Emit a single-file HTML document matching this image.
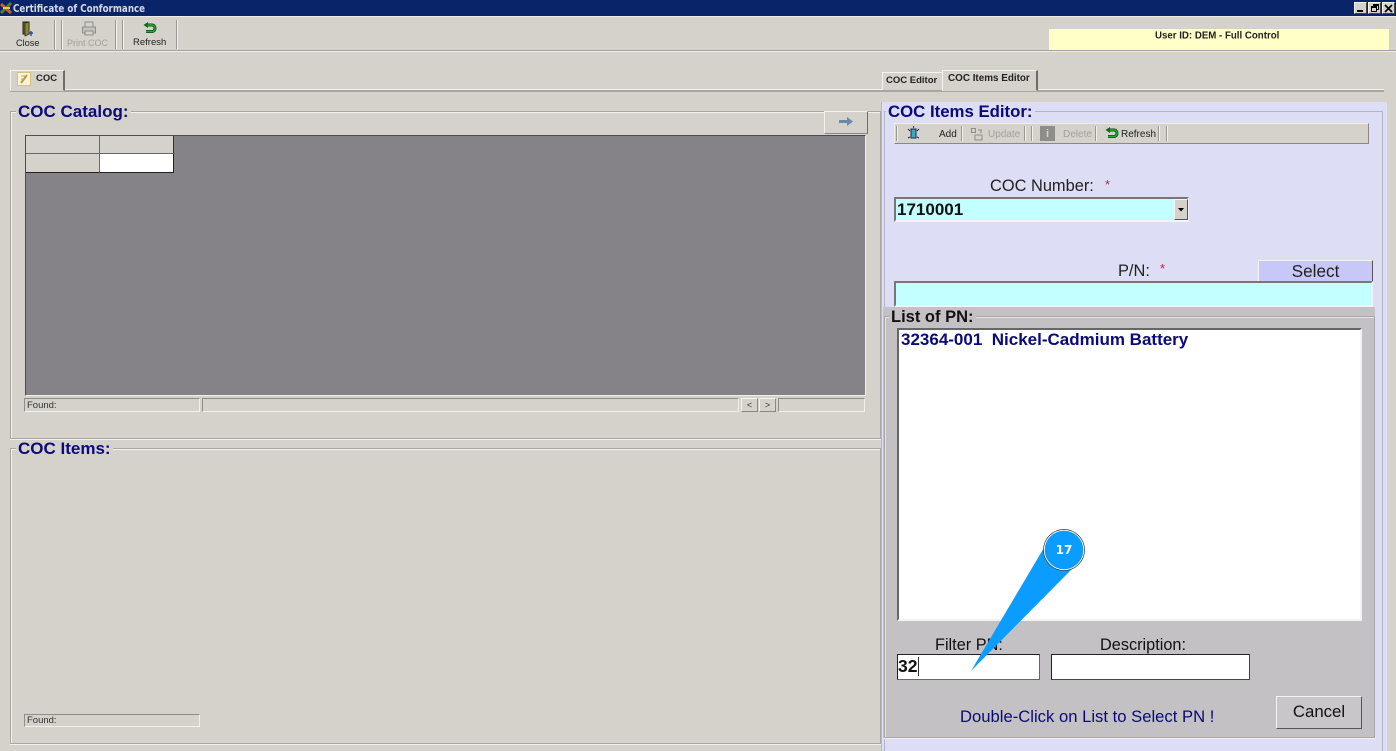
<!DOCTYPE html>
<html>
<head>
<meta charset="utf-8">
<style>
html,body{margin:0;padding:0;width:1396px;height:751px;overflow:hidden;background:#d5d2cc;font-family:"Liberation Sans",sans-serif;}
.a{position:absolute;box-sizing:border-box;white-space:nowrap;}
.sep{position:absolute;width:2px;background:#f2f0ec;border-left:1px solid #9a9894;box-sizing:border-box;}
.ttl{font-weight:bold;font-size:17px;color:#0a0a7a;line-height:18px;}
.sunken{border:1px solid;border-color:#8f8d89 #f3f1ed #f3f1ed #8f8d89;}
</style>
</head>
<body>
<!-- title bar -->
<div class="a" style="left:0;top:0;width:1396px;height:16px;background:#0a246a;"></div>
<div class="a" style="left:0;top:16px;width:1396px;height:1px;background:#f0eee9;"></div>
<svg class="a" style="left:0;top:1px;" width="13" height="14" viewBox="0 0 13 14"><path d="M1 12L11 2" stroke="#5a7a2a" stroke-width="3"/><path d="M1 3L11 12" stroke="#c0622a" stroke-width="3"/><path d="M3 7h7" stroke="#e8c850" stroke-width="2"/></svg>
<div class="a" style="left:13px;top:3px;font-size:10.500px;font-weight:bold;color:#d8d8e4;line-height:13px;font-family:'DejaVu Sans',sans-serif;transform:scaleX(.83);transform-origin:left;">Certificate of Conformance</div>
<!-- window buttons -->
<div class="a" style="left:1354px;top:2px;width:13px;height:12px;background:#d5d2cc;border:1px solid;border-color:#f5f5f5 #444 #444 #f5f5f5;"><div class="a" style="left:2px;top:7px;width:6px;height:2px;background:#000;"></div></div>
<div class="a" style="left:1368px;top:2px;width:13px;height:12px;background:#d5d2cc;border:1px solid;border-color:#f5f5f5 #444 #444 #f5f5f5;"><div class="a" style="left:4px;top:1px;width:6px;height:6px;border:1px solid #000;border-top-width:2px;"></div><div class="a" style="left:2px;top:3px;width:6px;height:6px;border:1px solid #000;border-top-width:2px;background:#d5d2cc;"></div></div>
<div class="a" style="left:1382px;top:2px;width:13px;height:12px;background:#d5d2cc;border:1px solid;border-color:#f5f5f5 #444 #444 #f5f5f5;"><svg class="a" style="left:1px;top:1px;" width="10" height="9"><path d="M1 1L8 8M8 1L1 8" stroke="#000" stroke-width="1.600"/></svg></div>

<!-- toolbar -->
<svg class="a" style="left:20px;top:21px;" width="15" height="16" viewBox="0 0 15 16"><path d="M3 1h6v12H3z" fill="#6a6a20" stroke="#222"/><path d="M5 2l4-1v12l-4 2z" fill="#8a8a30" stroke="#222" stroke-width=".7"/><path d="M9 12h4m-2-2v5" stroke="#2a4a9a" stroke-width="1.400" fill="none"/></svg>
<div class="a" style="left:16px;top:37px;font-size:9.200px;line-height:12px;color:#222;">Close</div>
<div class="sep" style="left:54px;top:20px;height:29px;"></div>
<div class="sep" style="left:61px;top:20px;height:29px;"></div>
<svg class="a" style="left:81px;top:21px;" width="16" height="15" viewBox="0 0 16 15" fill="none" stroke="#8f8d89"><path d="M4 6V1h8v5"/><path d="M1.500 6h13v6h-13z" fill="#c5c3bd"/><path d="M4 10h8v4H4z" fill="#d5d2cc"/></svg>
<div class="a" style="left:67px;top:37px;font-size:9px;line-height:12px;color:#a3a19d;">Print COC</div>
<div class="sep" style="left:115px;top:20px;height:29px;"></div>
<div class="sep" style="left:122px;top:20px;height:29px;"></div>
<svg class="a" style="left:143px;top:22px;" width="14" height="13" viewBox="0 0 14 13" fill="none"><path d="M4 3h5c4 0 4 6.500 0 6.500H3" stroke="#0c4a18" stroke-width="3"/><path d="M4 3h5c4 0 4 6.500 0 6.500H3" stroke="#20b030" stroke-width="1.400"/><path d="M0.500 3L5 0v6z" fill="#0c6a18"/></svg>
<div class="a" style="left:133px;top:37px;font-size:9.500px;line-height:12px;color:#222;">Refresh</div>
<div class="sep" style="left:176px;top:20px;height:29px;"></div>
<div class="a" style="left:0;top:50px;width:1396px;height:2px;background:#a3a19d;border-bottom:1px solid #efede9;"></div>
<div class="a" style="left:1049px;top:29px;width:340px;height:21px;background:#ffffc8;"></div>
<div class="a" style="left:1155px;top:30px;font-size:9.700px;font-weight:bold;line-height:12px;color:#222;transform:translateY(0.500px);">User ID: DEM - Full Control</div>

<!-- left tab -->
<div class="a" style="left:10px;top:89px;width:1374px;height:3px;background:#a8a6a2;border-top:1px solid #f3f1ed;"></div>
<div class="a" style="left:10px;top:70px;width:55px;height:21px;background:#d5d2cc;border:1px solid;border-color:#f5f3ef #6e6c68 #d5d2cc #f5f3ef;border-right-width:2px;"></div>
<div class="a" style="left:17px;top:72px;width:14px;height:14px;background:#fff5cf;border:1px solid #d8c080;"></div>
<svg class="a" style="left:19px;top:73px;" width="11" height="12"><path d="M2 10L8 2" stroke="#b89a40" stroke-width="2"/><path d="M2 3h4M2 6h3" stroke="#aaa"/></svg>
<div class="a" style="left:36px;top:73px;font-size:9.500px;font-weight:bold;line-height:12px;color:#222;">COC</div>

<!-- right tabs -->
<div class="a" style="left:882px;top:72px;width:61px;height:18px;background:#d5d2cc;border:1px solid;border-color:#f5f3ef #d5d2cc #d5d2cc #f5f3ef;"></div>
<div class="a" style="left:886px;top:75px;font-size:9.500px;font-weight:bold;line-height:12px;color:#222;">COC Editor</div>
<div class="a" style="left:942px;top:70px;width:96px;height:21px;background:#d5d2cc;border:1px solid;border-color:#f5f3ef #6e6c68 #d5d2cc #f5f3ef;border-right-width:2px;"></div>
<div class="a" style="left:948px;top:73px;font-size:9.900px;font-weight:bold;line-height:12px;color:#222;">COC Items Editor</div>

<!-- COC Catalog -->
<div class="a" style="left:10px;top:111px;width:871px;height:328px;border:1px solid #a8a6a2;box-shadow:inset 1px 1px 0 #f3f1ed,0 1px 0 #f3f1ed;"></div>
<div class="a ttl" style="left:16px;top:103px;padding:0 2px;background:#d5d2cc;">COC Catalog:</div>
<div class="a" style="left:824px;top:111px;width:44px;height:23px;background:#d5d2cc;border:1px solid;border-color:#f5f3ef #6e6c68 #8a8884 #f5f3ef;"></div>
<svg class="a" style="left:839px;top:116px;" width="15" height="11"><path d="M0 4h8V1l6 4.500-6 4.500V7H0z" fill="#6a8aa8"/></svg>
<div class="a" style="left:25px;top:135px;width:841px;height:261px;background:#858387;border:1px solid;border-color:#4e4d4d #f0eee9 #f0eee9 #4e4d4d;"></div>
<div class="a" style="left:26px;top:136px;width:74px;height:18px;background:#d5d2cc;border-right:1px solid #666;border-bottom:1px solid #666;"></div>
<div class="a" style="left:100px;top:136px;width:74px;height:18px;background:#d5d2cc;border-right:1px solid #333;border-bottom:1px solid #666;"></div>
<div class="a" style="left:26px;top:154px;width:74px;height:19px;background:#d5d2cc;border-right:1px solid #666;border-bottom:1px solid #222;"></div>
<div class="a" style="left:100px;top:154px;width:74px;height:19px;background:#fff;border-right:1px solid #222;border-bottom:1px solid #222;"></div>

<div class="a sunken" style="left:24px;top:398px;width:176px;height:14px;"></div>
<div class="a" style="left:27px;top:399px;font-size:9.500px;line-height:12px;color:#333;transform:translateY(1px);">Found:</div>
<div class="a sunken" style="left:202px;top:398px;width:537px;height:14px;"></div>
<div class="a" style="left:741px;top:398px;width:17px;height:14px;background:#d5d2cc;border:1px solid;border-color:#f5f3ef #8a8884 #8a8884 #f5f3ef;font-size:9px;line-height:12px;text-align:center;color:#333;">&lt;</div>
<div class="a" style="left:759px;top:398px;width:17px;height:14px;background:#d5d2cc;border:1px solid;border-color:#f5f3ef #8a8884 #8a8884 #f5f3ef;font-size:9px;line-height:12px;text-align:center;color:#333;">&gt;</div>
<div class="a sunken" style="left:778px;top:398px;width:87px;height:14px;"></div>

<!-- COC Items -->
<div class="a" style="left:10px;top:448px;width:871px;height:296px;border:1px solid #a8a6a2;box-shadow:inset 1px 1px 0 #f3f1ed,0 1px 0 #f3f1ed;"></div>
<div class="a ttl" style="left:16px;top:440px;padding:0 2px;background:#d5d2cc;">COC Items:</div>
<div class="a sunken" style="left:24px;top:714px;width:176px;height:13px;"></div>
<div class="a" style="left:27px;top:715px;font-size:9.500px;line-height:12px;color:#333;">Found:</div>

<!-- right panel -->
<div class="a" style="left:881px;top:102px;width:506px;height:649px;background:#ddddf5;border-left:1px solid #b8b6c4;"></div>
<div class="a" style="left:884px;top:111px;width:499px;height:640px;border:1px solid #b4b4c6;border-bottom:none;"></div>
<div class="a ttl" style="left:886px;top:103px;padding:0 2px;background:#ddddf5;font-size:16.800px;">COC Items Editor:</div>
<div class="a" style="left:894px;top:123px;width:475px;height:21px;background:#d5d2cc;border:1px solid;border-color:#f0eee9 #8a8884 #8a8884 #f0eee9;"></div>
<div class="sep" style="left:896px;top:126px;height:15px;"></div>
<svg class="a" style="left:906px;top:126px;" width="15" height="15"><path d="M5 3h5v9H5z" fill="#30b0b8" stroke="#226"/><path d="M2 3l2 2M13 3l-2 2M2 12l2-1M13 12l-2-1M7.500 0v2" stroke="#333"/></svg>
<div class="a" style="left:939px;top:128px;font-size:10px;line-height:13px;color:#222;">Add</div>
<div class="sep" style="left:961px;top:126px;height:15px;"></div>
<svg class="a" style="left:970px;top:127px;" width="14" height="14" fill="none" stroke="#8f8d89"><path d="M1.500 1.500h4v4h-4zM8 3h4M11 3v3M5 8h7v5H5z"/></svg>
<div class="a" style="left:988px;top:128px;font-size:10px;line-height:13px;color:#a3a19d;">Update</div>
<div class="sep" style="left:1024px;top:126px;height:15px;"></div>
<div class="sep" style="left:1031px;top:126px;height:15px;"></div>
<div class="a" style="left:1040px;top:126px;width:15px;height:15px;background:#8f8d89;color:#d5d2cc;font-size:11px;font-weight:bold;line-height:16px;text-align:center;">i</div>
<div class="a" style="left:1063px;top:128px;font-size:10px;line-height:13px;color:#a3a19d;">Delete</div>
<div class="sep" style="left:1095px;top:126px;height:15px;"></div>
<svg class="a" style="left:1105px;top:127px;" width="14" height="13" viewBox="0 0 14 13" fill="none"><path d="M4 3h5c4 0 4 6.500 0 6.500H3" stroke="#0c4a18" stroke-width="3"/><path d="M4 3h5c4 0 4 6.500 0 6.500H3" stroke="#20b030" stroke-width="1.400"/><path d="M0.500 3L5 0v6z" fill="#0c6a18"/></svg>
<div class="a" style="left:1121px;top:128px;font-size:10px;line-height:13px;color:#222;">Refresh</div>
<div class="sep" style="left:1158px;top:126px;height:15px;"></div>
<div class="sep" style="left:1166px;top:126px;height:15px;"></div>

<div class="a" style="left:990px;top:177px;font-size:16.400px;line-height:18px;color:#222;">COC Number:</div>
<div class="a" style="left:1105px;top:177px;font-size:13px;line-height:15px;color:#c02040;">*</div>
<div class="a" style="left:894px;top:197px;width:295px;height:25px;background:#c4ffff;border:2px solid;border-color:#777 #f3f3fb #f3f3fb #777;"></div>
<div class="a" style="left:897px;top:200px;font-size:17px;font-weight:bold;line-height:19px;color:#111;">1710001</div>
<div class="a" style="left:1174px;top:199px;width:14px;height:21px;background:#d5d2cc;border:1px solid;border-color:#f5f3ef #555 #555 #f5f3ef;"></div>
<svg class="a" style="left:1178px;top:208px;" width="6" height="4"><path d="M0 0h6L3 3.500z" fill="#000"/></svg>

<div class="a" style="left:1118px;top:262px;font-size:16.400px;line-height:18px;color:#222;">P/N:</div>
<div class="a" style="left:1160px;top:261px;font-size:13px;line-height:15px;color:#c02040;">*</div>
<div class="a" style="left:1258px;top:260px;width:115px;height:22px;background:#c8c8f8;border:1px solid;border-color:#f3f3fb #555 #555 #f3f3fb;font-size:17.200px;line-height:21px;text-align:center;color:#222;">Select</div>
<div class="a" style="left:894px;top:281px;width:479px;height:26px;background:#c4ffff;border:2px solid;border-color:#777 #f3f3fb #f3f3fb #777;"></div>

<!-- List of PN -->
<div class="a" style="left:883px;top:307px;width:493px;height:432px;background:#c3c1c3;border-bottom:1px solid #f0f0f5;border-right:1px solid #e0e0e8;"></div>
<div class="a" style="left:884px;top:316px;width:491px;height:422px;border:1px solid #a8a6a8;box-shadow:inset 1px 1px 0 #e4e2e4;"></div>
<div class="a" style="left:889px;top:308px;padding:0 2px;background:#c3c1c3;font-size:16.500px;font-weight:bold;line-height:18px;color:#111;">List of PN:</div>
<div class="a" style="left:897px;top:328px;width:465px;height:293px;background:#fff;border:2px solid;border-color:#666 #f3f3f3 #f3f3f3 #666;"></div>
<div class="a" style="left:901px;top:330px;font-size:17px;font-weight:bold;line-height:19px;color:#0a0a7a;white-space:pre;">32364-001  Nickel-Cadmium Battery</div>

<div class="a" style="left:935px;top:636px;font-size:16.300px;line-height:18px;color:#111;">Filter PN:</div>
<div class="a" style="left:1100px;top:636px;font-size:16.300px;line-height:18px;color:#111;">Description:</div>
<div class="a" style="left:897px;top:654px;width:143px;height:26px;background:#fff;border:1px solid;border-color:#222 #666 #666 #222;"></div>
<div class="a" style="left:898px;top:657px;font-size:17.500px;font-weight:bold;line-height:19px;color:#111;">32</div>
<div class="a" style="left:918px;top:657px;width:1px;height:19px;background:#333;"></div>
<div class="a" style="left:1051px;top:654px;width:199px;height:26px;background:#fff;border:1px solid;border-color:#222 #444 #444 #222;"></div>
<div class="a" style="left:960px;top:708px;font-size:16.650px;line-height:18px;color:#0a0a7a;">Double-Click on List to Select PN !</div>
<div class="a" style="left:1276px;top:696px;width:86px;height:33px;background:#c8c6c8;border:1px solid;border-color:#f3f3f3 #555 #555 #f3f3f3;font-size:16.800px;line-height:30px;text-align:center;color:#111;">Cancel</div>

<!-- callout -->
<svg class="a" style="left:960px;top:520px;" width="140" height="160" viewBox="960 520 140 160">
<path d="M971 671L1045 546L1071 570Z" fill="#0a9cff"/>
<circle cx="1064" cy="550" r="20" fill="#0a9cff" stroke="#fff" stroke-width="1.500"/>
<circle cx="1064" cy="550" r="20.500" fill="none" stroke="#333" stroke-width=".7"/>
</svg>
<div class="a" style="left:1044px;top:542px;width:40px;text-align:center;font-family:'DejaVu Sans',sans-serif;font-size:12px;font-weight:bold;line-height:16px;color:#fff;">17</div>
</body>
</html>
